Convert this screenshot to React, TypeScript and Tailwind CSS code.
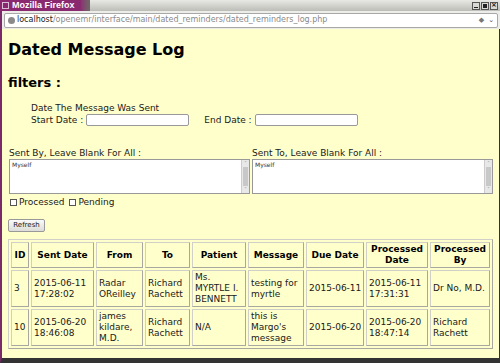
import React from "react";

const rows = [
  {
    id: "3",
    sent: ["2015-06-11", "17:28:02"],
    from: ["Radar", "OReilley"],
    to: ["Richard", "Rachett"],
    patient: ["Ms.", "MYRTLE I.", "BENNETT"],
    message: ["testing for", "myrtle"],
    due: ["2015-06-11"],
    processed: ["2015-06-11", "17:31:31"],
    by: ["Dr No, M.D."],
  },
  {
    id: "10",
    sent: ["2015-06-20", "18:46:08"],
    from: ["james", "kildare,", "M.D."],
    to: ["Richard", "Rachett"],
    patient: ["N/A"],
    message: ["this is", "Margo's", "message"],
    due: ["2015-06-20"],
    processed: ["2015-06-20", "18:47:14"],
    by: ["Richard", "Rachett"],
  },
];

const headers = [
  { label: ["ID"], w: "w-[18px]" },
  { label: ["Sent Date"], w: "w-[63px]" },
  { label: ["From"], w: "w-[47px]" },
  { label: ["To"], w: "w-[45px]" },
  { label: ["Patient"], w: "w-[54px]" },
  { label: ["Message"], w: "w-[56px]" },
  { label: ["Due Date"], w: "w-[58px]" },
  { label: ["Processed", "Date"], w: "w-[62px]" },
  { label: ["Processed", "By"], w: "w-[60px]" },
];

function Lines({ items }: { items: string[] }) {
  return (
    <>
      {items.map((t, i) => (
        <div key={i} className="whitespace-nowrap">{t}</div>
      ))}
    </>
  );
}

export default function App() {
  const cell = "border border-[#a8a8a0] border-t-[#d0d0c8] border-l-[#d0d0c8] px-[2px] align-middle overflow-hidden";
  return (
    <div className="w-[500px] h-[363px] flex flex-col bg-[#3c3c3c] overflow-hidden font-['DejaVu_Sans',sans-serif] text-[#1a1a1a]">
      {/* title bar */}
      <div className="h-[11px] flex items-stretch bg-gradient-to-b from-[#e8e8e4] to-[#bdbdb8]">
        <div className="w-[80px] bg-[#8a2870] flex items-center pl-[2px] gap-[3px]">
          <div className="w-[7px] h-[7px] border border-white/70 shrink-0" />
          <span className="whitespace-nowrap text-[9px] leading-none font-bold text-white font-['Liberation_Sans',sans-serif]">Mozilla Firefox</span>
        </div>
        <div className="w-[10px] bg-gradient-to-r from-[#8a2870] to-[#6a6a66]" />
        <div className="flex-1" />
        <div className="flex items-center gap-[1px] pr-[2px]">
          <div className="w-[8px] h-[8px] bg-[#d8d8d4] border border-[#555] flex items-end justify-center pb-[1px]">
            <div className="w-[4px] h-[1px] bg-[#222]" />
          </div>
          <div className="w-[8px] h-[8px] bg-[#d8d8d4] border border-[#555] flex items-center justify-center">
            <div className="w-[4px] h-[4px] bg-[#222]" />
          </div>
          <div className="w-[8px] h-[8px] bg-[#d8d8d4] border border-[#555] flex items-center justify-center text-[7px] leading-none font-bold">
            ×
          </div>
        </div>
      </div>

      {/* url bar */}
      <div className="h-[18px] bg-[#ecece8] border-l-2 border-[#7a2a68] flex items-center pl-[2px] pr-[2px]">
        <div className="flex-1 h-[15px] bg-white border border-[#a8a8a8] rounded-[2px] flex items-center px-[3px] gap-[2px]">
          <div className="w-[7px] h-[7px] rounded-full bg-[#8a8a8a]" />
          <span className="text-[8px] leading-none text-[#222]">localhost</span>
          <span className="text-[8px] leading-none text-[#8a8a8a] -ml-[2px]">/openemr/interface/main/dated_reminders/dated_reminders_log.php</span>
          <div className="flex-1" />
          <span className="text-[7px] text-[#777]">◆</span>
          <span className="text-[7px] text-[#555] ml-[2px]">⌄</span>
        </div>
      </div>

      {/* page */}
      <div className="flex-1 flex border-l-2 border-[#7a2a68] border-r-2 border-r-[#333] border-b-[5px] border-b-[#333]">
        <div className="flex-1 bg-[#ffffcc] pl-[6px] pr-[6px] pt-[10px] text-[9px] leading-[11px]">
          <h1 className="text-[16px] leading-[22px] font-bold text-black">Dated Message Log</h1>
          <h2 className="mt-[14px] text-[13px] leading-[16px] font-bold text-black">filters :</h2>

          <div className="pl-[23px] mt-[12px]">
            <div>Date The Message Was Sent</div>
            <div className="flex items-center">
              <span>Start Date :</span>
              <div className="ml-[3px] w-[103px] h-[12px] bg-white border border-[#999] rounded-[2px]" />
              <span className="ml-[15px]">End Date :</span>
              <div className="ml-[3px] w-[103px] h-[12px] bg-white border border-[#999] rounded-[2px]" />
            </div>
          </div>

          <div className="flex mt-[22px] gap-[2px] pl-[1px]">
            {["Sent By, Leave Blank For All :", "Sent To, Leave Blank For All :"].map((label) => (
              <div key={label} className="flex-1">
                <div className="leading-[11px]">{label}</div>
                <div className="h-[35px] bg-white border border-[#999] flex">
                  <div className="flex-1 text-[6px] leading-[8px] pl-[2px] pt-[1px] text-[#333]">Myself</div>
                  <div className="w-[8px] bg-[#e8e8e8] border-l border-[#ccc] flex flex-col">
                    <div className="h-[7px] text-[5px] leading-[7px] text-center text-[#888]">˄</div>
                    <div className="flex-1 bg-[#c8c8c8] mx-[1px]" />
                    <div className="h-[7px] text-[5px] leading-[7px] text-center text-[#888]">˅</div>
                  </div>
                </div>
              </div>
            ))}
          </div>

          <div className="flex items-center mt-[2px] gap-[5px] text-[9px] leading-[12px] pl-[2px]">
            <label className="flex items-center gap-[2px]">
              <span className="w-[7px] h-[7px] border border-[#555] bg-white" />
              Processed
            </label>
            <label className="flex items-center gap-[2px]">
              <span className="w-[7px] h-[7px] border border-[#555] bg-white" />
              Pending
            </label>
          </div>

          <button className="mt-[11px] h-[13px] w-[37px] text-[7px] leading-none bg-gradient-to-b from-[#fafaf8] to-[#dcdcd8] border border-[#999] rounded-[2px] text-[#222]">
            Refresh
          </button>

          <table className="mt-[7px] table-fixed w-[485px] border-separate border-spacing-[2px] border border-[#d0d0c8] border-b-[#a8a8a0] border-r-[#a8a8a0] text-[9px] leading-[11px]">
            <thead>
              <tr className="h-[26px]">
                {headers.map((h, i) => (
                  <th key={i} className={`${cell} ${h.w} font-bold text-center text-black`}>
                    <Lines items={h.label} />
                  </th>
                ))}
              </tr>
            </thead>
            <tbody>
              {rows.map((r) => (
                <tr key={r.id} className="h-[37px] text-left">
                  <td className={cell}>{r.id}</td>
                  <td className={cell}><Lines items={r.sent} /></td>
                  <td className={cell}><Lines items={r.from} /></td>
                  <td className={cell}><Lines items={r.to} /></td>
                  <td className={cell}><Lines items={r.patient} /></td>
                  <td className={cell}><Lines items={r.message} /></td>
                  <td className={cell}><Lines items={r.due} /></td>
                  <td className={cell}><Lines items={r.processed} /></td>
                  <td className={cell}><Lines items={r.by} /></td>
                </tr>
              ))}
            </tbody>
          </table>
        </div>
      </div>
    </div>
  );
}
